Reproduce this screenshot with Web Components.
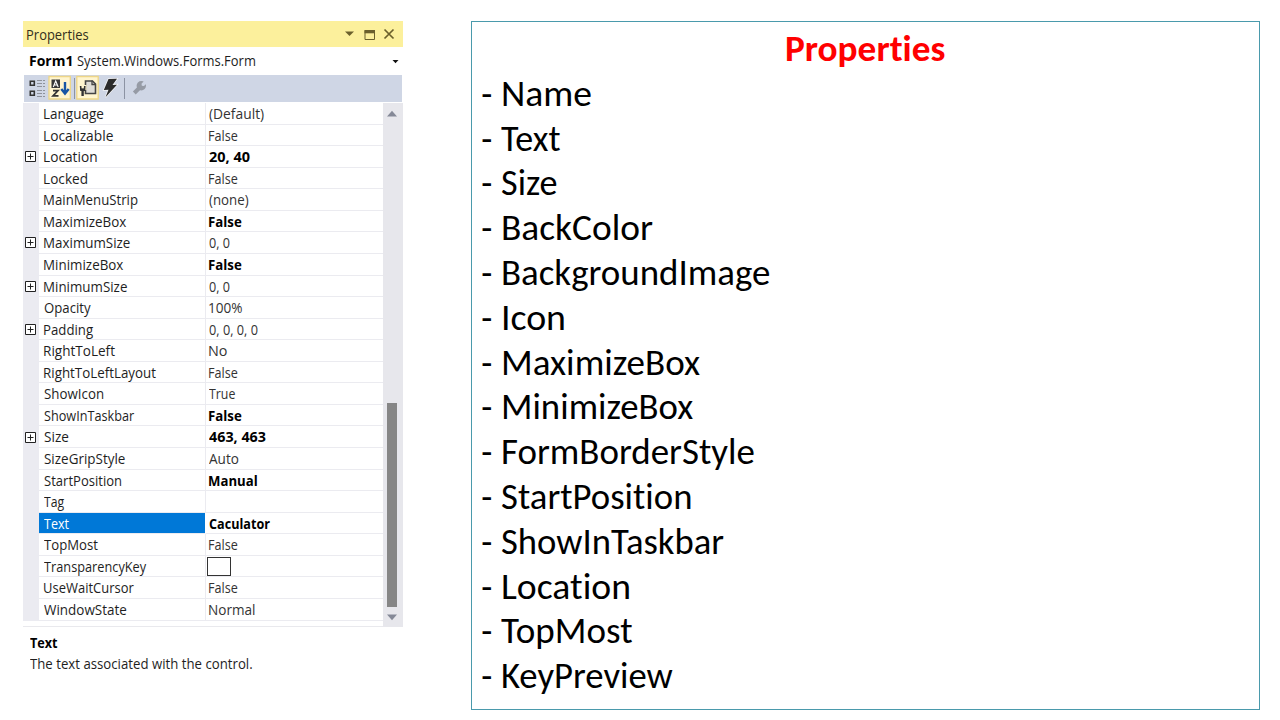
<!DOCTYPE html>
<html lang="en">
<head>
<meta charset="utf-8">
<title>Properties</title>
<style>
html,body{margin:0;width:1280px;height:720px;overflow:hidden;background:#fff}
</style>
</head>
<body>
<form-slide></form-slide>
<script>
// Text run whose drawn width is set by the "w" attribute.
const pen = document.createElement('canvas').getContext('2d');
pen.letterSpacing = '0.01px';
class FitText extends HTMLElement {
  connectedCallback() {
    if (this.shadowRoot) return;
    const root = this.attachShadow({mode: 'open'});
    root.innerHTML = `<style>:host{display:block;white-space:pre;letter-spacing:.01px;font-variant-ligatures:none}span{display:inline-block;transform-origin:0 50%}</style><span></span>`;
    const span = root.querySelector('span');
    span.textContent = this.getAttribute('text');
    const cs = getComputedStyle(this);
    pen.font = `${cs.fontWeight} ${cs.fontSize} ${cs.fontFamily}`;
    const m = pen.measureText(span.textContent);
    const s = Number(this.getAttribute('w')) / (m.actualBoundingBoxLeft + m.actualBoundingBoxRight);
    span.style.transform = `translateX(${m.actualBoundingBoxLeft * s}px) scaleX(${s})`;
  }
}
customElements.define('fit-text', FitText);

class PanelTitle extends HTMLElement {
  constructor() {
    super();
    this.attachShadow({mode: 'open'}).innerHTML = `<style>
:host{display:flex;align-items:center;justify-content:space-between;box-sizing:border-box;height:26px;padding:1px 6px 0 4.300px;background:#fcf09c;color:#332f1c}
svg{display:block;margin-top:-2px}</style>
<fit-text text="Properties" w="62"></fit-text>
<svg width="54" height="14" viewBox="0 0 54 14"><path d="M2 4.500h9L6.500 9z" fill="#6b602c"/><path d="M22 3.500h9.500v9H22z" fill="none" stroke="#6b602c" stroke-width="1"/><path d="M21.500 3h10.500v3.300h-10.500z" fill="#6b602c"/><path d="M41.500 2.500l9 9M50.500 2.500l-9 9" stroke="#6b602c" stroke-width="1.700"/></svg>`;
  }
}
customElements.define('panel-title', PanelTitle);

class ObjectPicker extends HTMLElement {
  constructor() {
    super();
    this.attachShadow({mode: 'open'}).innerHTML = `<style>
:host{display:flex;align-items:center;box-sizing:border-box;height:28px;padding:0 4px 0 6.500px}
.n{font-weight:700;color:#000;width:47.500px}.t{flex:1}</style>
<fit-text class="n" text="Form1" w="41.500"></fit-text><fit-text class="t" text="System.Windows.Forms.Form" w="178"></fit-text>
<svg width="7" height="5" viewBox="0 0 7 5"><path d="M.5 1h6l-3 3.300z" fill="#111"/></svg>`;
  }
}
customElements.define('object-picker', ObjectPicker);

class PanelToolbar extends HTMLElement {
  constructor() {
    super();
    this.attachShadow({mode: 'open'}).innerHTML = `<style>
:host{display:block;height:27px;width:378px;margin-left:1px;background:#cfd6e5}svg{display:block}</style>
<svg width="140" height="27" viewBox="24 75 140 27">
<g fill="none" stroke="#333" stroke-width="1.600"><path d="M30.300 81.300h4v4h-4zM30.300 91.300h4v4h-4z"/></g>
<g stroke="#8e929b" stroke-width="1"><path d="M37 80.500h8M37 83.500h8M37 86.500h8M37 90.500h8M37 93.500h8M37 96.500h8" stroke-dasharray="5 1"/></g>
<g fill="#fff5cf" stroke="#eed687" stroke-width="1.300"><path d="M49 76.500h21.300v22.500H49zM76.800 76.500h21.400v22.500H76.800z"/></g>
<path d="M51.500 79.500h8.500v8.500h-8.500z" fill="#383838"/>
<path d="M53.300 87l2.400-6 2.500 6M54.200 85h3.200" fill="none" stroke="#fff" stroke-width="1.100"/>
<path d="M53 90.600h5l-5 5.300h5.500" fill="none" stroke="#333" stroke-width="1.700"/>
<path d="M65 82v11M61.300 89l3.700 4.500 3.700-4.500" fill="none" stroke="#1755a5" stroke-width="2.400"/>
<path d="M74.500 78v21M124.500 78v21" stroke="#8c93a3" stroke-width="1"/>
<path d="M85.500 81h7l3 3v9.500h-10z" fill="#dedcd6" stroke="#444" stroke-width="1.600"/><path d="M92 80.500v4h4" fill="none" stroke="#444" stroke-width="1.300"/>
<path d="M79.500 87.500h7" stroke="#fff5cf" stroke-width="5"/>
<path d="M80.600 86l.3 3.500h3.600l.3-3.500" fill="none" stroke="#333" stroke-width="1.600"/><path d="M82.600 89v7" stroke="#333" stroke-width="2.400"/><path d="M80.200 88.500h5v2.500h-5z" fill="#333"/>
<path d="M108.500 79l8.500-.3-4.500 6.300 4.500-.3-11.500 12.600 3-7.600-4.700.3z" fill="#2b2b2b" stroke="#f2f3f5" stroke-width="1.500" paint-order="stroke"/>
<path d="M134.300 93l6-6" stroke="#969ba5" stroke-width="4"/><circle cx="141.300" cy="85.800" r="4.700" fill="#969ba5"/><path d="M145.500 79.500l-4 4.200.3 2 2.200.3 4-4z" fill="#cfd6e5"/>
</svg>`;
  }
}
customElements.define('panel-toolbar', PanelToolbar);

class PropertyRow extends HTMLElement {
  connectedCallback() {
    if (this.shadowRoot) return;
    const a = n => this.getAttribute(n);
    const value = this.hasAttribute('swatch') ? '<i class="swatch"></i>'
      : a('value') ? `<fit-text class="v" text="${a('value')}" w="${a('vw')}"></fit-text>` : '';
    this.attachShadow({mode: 'open'}).innerHTML = `<style>
:host{display:grid;grid-template-columns:16px 167px 1fr;height:21.570px;line-height:22.400px}
.g{background:#ebebf1;display:flex;align-items:center;padding-left:2px;box-sizing:border-box}
.c{box-sizing:border-box;border-bottom:1px solid #ebebf0;min-width:0;height:21.570px}
.k{border-right:1px solid #ebebf0;padding-left:5.300px}
.x{padding-left:3.300px;color:#333}
:host([bold]) .x{font-weight:700;color:#000}
:host([selected]) .k{background:#0078d7;color:#fff;border-right-color:#fff}
.swatch{display:block;box-sizing:border-box;width:24px;height:19px;margin:1.500px 0 0 -2.300px;border:1.300px solid #333;background:#fff}
svg{display:block;margin-top:-.4px}</style>
<div class="g">${this.hasAttribute('plus') ? '<svg width="11" height="11" viewBox="0 0 11 11"><path d="M.5 .5h10v10H.500zM2.500 5.500h6M5.500 2.500v6" fill="#fff" stroke="#222"/></svg>' : ''}</div>
<div class="c k"><fit-text text="${a('name')}" w="${a('nw')}"></fit-text></div><div class="c x">${value}</div>`;
  }
}
customElements.define('property-row', PropertyRow);

class ScrollTrack extends HTMLElement {
  constructor() {
    super();
    this.attachShadow({mode: 'open'}).innerHTML = `<style>
:host{display:flex;flex-direction:column;align-items:center;box-sizing:border-box;padding-right:1px;background:#e7e7ec}
svg{display:block;flex:none}.space{height:286px}.thumb{width:10.500px;height:204px;background:#868686}.up{margin-top:6.500px}.dn{margin-top:7px}</style>
<svg class="up" width="12" height="7" viewBox="0 0 12 7"><path d="M1 6.500h10L6 .8z" fill="#858997"/></svg>
<div class="space"></div><div class="thumb"></div>
<svg class="dn" width="12" height="7" viewBox="0 0 12 7"><path d="M1 .5h10L6 6.200z" fill="#858997"/></svg>`;
  }
}
customElements.define('scroll-track', ScrollTrack);

// [name, name width, value, value width, flags]
const ROWS = [
  ['Language', 60, '(Default)', 55, ''], ['Localizable', 69.5, 'False', 29, ''],
  ['Location', 53, '20, 40', 41, 'bold plus'], ['Locked', 43.5, 'False', 29, ''],
  ['MainMenuStrip', 93.5, '(none)', 39.5, ''], ['MaximizeBox', 83, 'False', 32.5, 'bold'],
  ['MaximumSize', 86.5, '0, 0', 21, 'plus'], ['MinimizeBox', 80, 'False', 32.5, 'bold'],
  ['MinimumSize', 83.5, '0, 0', 21, 'plus'], ['Opacity', 47.5, '100%', 33, ''],
  ['Padding', 49.5, '0, 0, 0, 0', 49, 'plus'], ['RightToLeft', 71, 'No', 18, ''],
  ['RightToLeftLayout', 112, 'False', 29, ''], ['ShowIcon', 59.5, 'True', 26.5, ''],
  ['ShowInTaskbar', 90.5, 'False', 32.5, 'bold'], ['Size', 25, '463, 463', 57, 'bold plus'],
  ['SizeGripStyle', 81.5, 'Auto', 29.5, ''], ['StartPosition', 77.5, 'Manual', 48.5, 'bold'],
  ['Tag', 20.5, '', 0, ''], ['Text', 25, 'Caculator', 61.5, 'bold selected'],
  ['TopMost', 54, 'False', 29, ''], ['TransparencyKey', 103, '', 0, 'swatch'],
  ['UseWaitCursor', 90, 'False', 29, ''], ['WindowState', 83, 'Normal', 46, '']
];

class PropertiesPanel extends HTMLElement {
  constructor() {
    super();
    this.attachShadow({mode: 'open'}).innerHTML = `<style>
:host{display:block;width:380px;font:14px/20px "Open Sans","Noto Sans",sans-serif;color:#1e1e1e}
.body{display:grid;grid-template-columns:359.500px 20px;height:524px;margin-top:1px}
.rows{box-sizing:border-box;border-bottom:1px solid #e9e9ed}
.help{padding:6px 0 0 6.500px}.help .h{font-weight:700;color:#000;height:21px}
</style>
<panel-title></panel-title><object-picker></object-picker><panel-toolbar></panel-toolbar>
<div class="body"><div class="rows">${ROWS.map(r => `<property-row name="${r[0]}" nw="${r[1]}" value="${r[2]}" vw="${r[3]}" ${r[4]}></property-row>`).join('')}</div><scroll-track></scroll-track></div>
<div class="help"><fit-text class="h" text="Text" w="27.500"></fit-text><fit-text text="The text associated with the control." w="222"></fit-text></div>`;
  }
}
customElements.define('properties-panel', PropertiesPanel);

const ITEMS = [['Name', 88], ['Text', 59.5], ['Size', 55.5], ['BackColor', 149.5], ['BackgroundImage', 266.5], ['Icon', 61], ['MaximizeBox', 197.5], ['MinimizeBox', 190.5], ['FormBorderStyle', 251], ['StartPosition', 189.5], ['ShowInTaskbar', 222.5], ['Location', 126], ['TopMost', 131.5], ['KeyPreview', 170]];

class PropertyList extends HTMLElement {
  constructor() {
    super();
    this.attachShadow({mode: 'open'}).innerHTML = `<style>
:host{display:block;box-sizing:border-box;width:789px;height:689px;border:1px solid #4a9aac;padding-top:5px;font:36px/44.800px Carlito,Lato,sans-serif;color:#000}
.title{width:158px;margin:0 auto;font-weight:700;color:#f00}
.item{display:grid;grid-template-columns:19.200px 1fr;height:44.800px;padding-left:10.300px}
.in{padding-left:1.700px}
</style>
<fit-text class="title" text="Properties" w="158"></fit-text>
${ITEMS.map(([t, w]) => `<div class="item"><fit-text text="-" w="9"></fit-text><fit-text text="${t}" w="${w}" class="${/^[TS]/.test(t) ? '' : 'in'}"></fit-text></div>`).join('')}`;
  }
}
customElements.define('property-list', PropertyList);

class FormSlide extends HTMLElement {
  constructor() {
    super();
    this.attachShadow({mode: 'open'}).innerHTML = `<style>
:host{display:flex;align-items:flex-start;gap:68px;padding:21px 0 0 23px;width:1257px;height:699px}</style>
<properties-panel></properties-panel><property-list></property-list>`;
  }
}
customElements.define('form-slide', FormSlide);
</script>
</body>
</html>
